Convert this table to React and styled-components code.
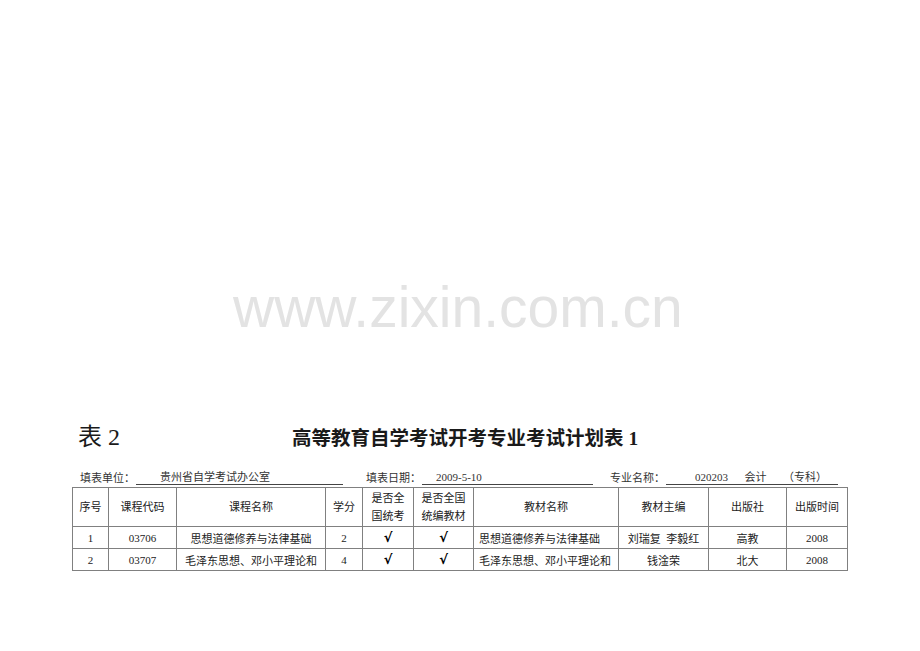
import React from "react";
import styled, { createGlobalStyle } from "styled-components";

const GlobalStyle = createGlobalStyle`
  body {
    margin: 0;
    background: #fff;
    font-family: "Liberation Serif", "Noto Sans CJK SC", serif;
    color: #1a1a1a;
  }
`;

const Page = styled.div`
  width: 920px;
  height: 651px;
  padding-top: 279px;
  box-sizing: border-box;
  overflow: hidden;
`;

const Watermark = styled.div`
  padding-left: 233px;
  font-family: "Liberation Sans", Arial, sans-serif;
  font-size: 57px;
  line-height: 57px;
  color: #e3e3e3;
  height: 57px;
`;

const TitleRow = styled.div`
  display: flex;
  align-items: baseline;
  margin-top: 86px;
  padding-left: 78px;
  height: 30px;
  line-height: 30px;
`;

const TableNo = styled.div`
  width: 214px;
  font-size: 24px;
`;

const MainTitle = styled.div`
  font-size: 19.5px;
  font-weight: bold;
`;

const InfoRow = styled.div`
  display: flex;
  align-items: flex-end;
  margin-top: 18px;
  padding-left: 80px;
  font-size: 11px;
  line-height: 14px;
  color: #333;
`;

const Label = styled.span`
  width: 56px;
  flex: none;
`;

const Blank = styled.span`
  display: flex;
  width: ${(p) => p.$w}px;
  padding-left: ${(p) => p.$indent}px;
  margin-right: ${(p) => p.$after}px;
  border-bottom: 1px solid #444;
  box-sizing: border-box;
  white-space: pre;
`;

const Table = styled.table`
  margin: 2px 0 0 72px;
  border-collapse: collapse;
  font-size: 11px;
  color: #222;
  table-layout: fixed;
  border: 1px solid #555;

  th,
  td {
    border: 1px solid #808080;
    text-align: center;
    padding: 0;
    font-weight: normal;
    white-space: nowrap;
  }
  th {
    height: 38px;
    line-height: 18px;
  }
  td {
    height: 21px;
  }
`;

const Left = styled.td`
  && {
    text-align: left;
    padding-left: 5px;
  }
`;

const Check = styled.span`
  font-family: "DejaVu Sans", sans-serif;
  font-weight: bold;
  font-size: 13px;
  color: #000;
`;

const cols = [36, 68, 149, 37, 51, 60, 145, 90, 78, 61];

const rows = [
  ["1", "03706", "思想道德修养与法律基础", "2", "思想道德修养与法律基础", "刘瑞复  李毅红", "高教", "2008"],
  ["2", "03707", "毛泽东思想、邓小平理论和", "4", "毛泽东思想、邓小平理论和", "钱淦荣", "北大", "2008"],
];

export default function App() {
  return (
    <Page>
      <GlobalStyle />
      <Watermark>www.zixin.com.cn</Watermark>
      <TitleRow>
        <TableNo>表 2</TableNo>
        <MainTitle>高等教育自学考试开考专业考试计划表 1</MainTitle>
      </TitleRow>
      <InfoRow>
        <Label>填表单位：</Label>
        <Blank $w={207} $indent={24} $after={23}>贵州省自学考试办公室</Blank>
        <Label>填表日期：</Label>
        <Blank $w={171} $indent={14} $after={17}>2009-5-10</Blank>
        <Label>专业名称：</Label>
        <Blank $w={172} $indent={29} $after={0}>
          {"020203      会计      （专科）"}
        </Blank>
      </InfoRow>
      <Table>
        <colgroup>
          {cols.map((w, i) => (
            <col key={i} style={{ width: w }} />
          ))}
        </colgroup>
        <thead>
          <tr>
            <th>序号</th>
            <th>课程代码</th>
            <th>课程名称</th>
            <th>学分</th>
            <th>是否全<br />国统考</th>
            <th>是否全国<br />统编教材</th>
            <th>教材名称</th>
            <th>教材主编</th>
            <th>出版社</th>
            <th>出版时间</th>
          </tr>
        </thead>
        <tbody>
          {rows.map((r) => (
            <tr key={r[0]}>
              <td>{r[0]}</td>
              <td>{r[1]}</td>
              <td>{r[2]}</td>
              <td>{r[3]}</td>
              <td><Check>√</Check></td>
              <td><Check>√</Check></td>
              <Left>{r[4]}</Left>
              <td style={{ whiteSpace: "pre" }}>{r[5]}</td>
              <td>{r[6]}</td>
              <td>{r[7]}</td>
            </tr>
          ))}
        </tbody>
      </Table>
    </Page>
  );
}
